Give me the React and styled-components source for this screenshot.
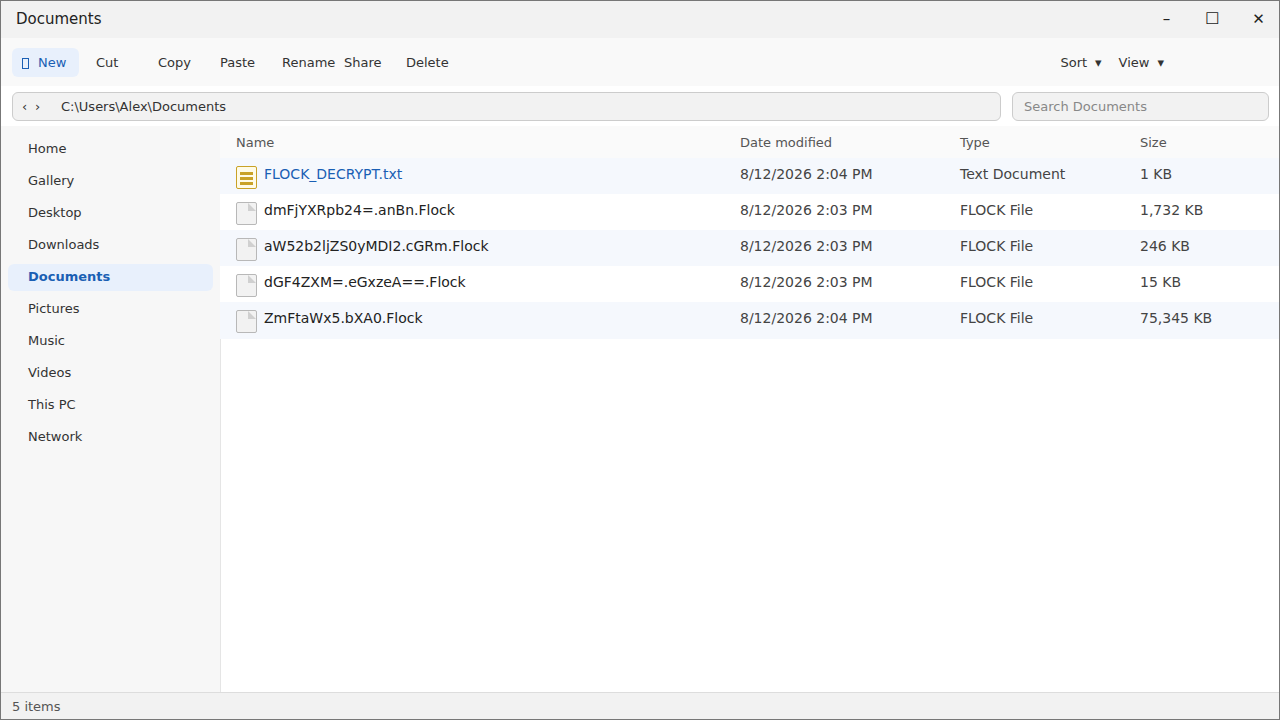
import React from 'react';
import styled, { createGlobalStyle } from 'styled-components';

const GlobalStyle = createGlobalStyle`
  *, *::before, *::after { box-sizing: border-box; }
  body { margin: 0; }
  body, button, input {
    font-family: "DejaVu Sans", Verdana, sans-serif;
    font-size: 13px;
    color: #333;
  }
`;

const Window = styled.div`
  display: flex;
  flex-direction: column;
  min-height: 100vh;
  border: 1px solid #777;
  background: #fff;
`;

const TitleBar = styled.header`
  display: flex;
  align-items: center;
  justify-content: space-between;
  height: 37px;
  padding: 0 0 1px 15px;
  background: #f2f2f2;
`;

const Title = styled.h1`
  margin: 0;
  font-size: 15px;
  font-weight: 400;
  line-height: 20px;
  color: #222;
`;

const WindowControls = styled.div`
  display: flex;
`;

const WindowButton = styled.button`
  width: 46px;
  height: 36px;
  padding: 0 0 0 5px;
  border: 0;
  background: none;
  font-size: ${(p) => (p.$large ? '16px' : '15px')};
  line-height: 20px;
  color: #222;
`;

const Toolbar = styled.div`
  display: flex;
  align-items: center;
  height: 48px;
  padding: 0 115px 0 11px;
  background: #f9f9f9;
`;

const ToolButton = styled.button`
  flex: none;
  width: 62px;
  height: 28px;
  padding: 0;
  border: 0;
  background: none;
  text-align: left;
`;

const NewButton = styled.button`
  display: flex;
  align-items: center;
  gap: 8px;
  width: 67px;
  height: 29px;
  margin-right: 17px;
  padding: 0 0 0 10px;
  border: 0;
  border-radius: 6px;
  background: #e8f0fc;
  color: #1a5fb4;
`;

const MenuGroup = styled.div`
  display: flex;
  gap: 17px;
  margin-left: auto;
`;

const MenuButton = styled.button`
  display: flex;
  align-items: center;
  gap: 8px;
  height: 28px;
  padding: 0;
  border: 0;
  background: none;
`;

const AddressRow = styled.div`
  display: flex;
  gap: 11px;
  height: 40px;
  padding: 6px 10px 5px 11px;
`;

const AddressBar = styled.div`
  display: flex;
  flex: 1;
  align-items: center;
  padding-left: 5px;
  border: 1px solid #ccc;
  border-radius: 6px;
  background: #f2f2f2;
`;

const NavButton = styled.button`
  width: 13px;
  padding: 0;
  border: 0;
  background: none;
`;

const PathInput = styled.input`
  flex: 1;
  min-width: 0;
  margin-left: 17px;
  padding: 0;
  border: 0;
  outline: 0;
  background: none;
`;

const SearchInput = styled.input`
  width: 257px;
  padding: 0 11px;
  border: 1px solid #ccc;
  border-radius: 6px;
  outline: 0;
  background: #f2f2f2;
  &::placeholder { color: #888; opacity: 1; }
`;

const Body = styled.div`
  display: flex;
  flex: 1;
`;

const Sidebar = styled.nav`
  display: flex;
  flex-direction: column;
  flex: none;
  gap: 5px;
  width: 219px;
  padding: 10px 7px 0;
  background: #f7f7f7;
`;

const SidebarLink = styled.a`
  height: 27px;
  padding-left: 20px;
  border-radius: 6px;
  background: ${(p) => (p.$active ? '#e8f0fc' : 'transparent')};
  color: ${(p) => (p.$active ? '#1a5fb4' : '#333')};
  font-weight: ${(p) => (p.$active ? 700 : 400)};
  line-height: 25px;
  text-decoration: none;
`;

const Main = styled.main`
  flex: 1;
  min-width: 0;
  box-shadow: inset 1px 0 #e5e5e5;
`;

const FileTable = styled.table`
  width: 100%;
  table-layout: fixed;
  border-spacing: 0;
`;

const HeadCell = styled.th`
  width: ${(p) => p.$width || 'auto'};
  height: 32px;
  padding: 0 0 0 ${(p) => (p.$first ? '16px' : '0')};
  background: #fafafa;
  color: #555;
  font-weight: 400;
  text-align: left;
`;

const Row = styled.tr`
  height: 36px;
  background: #fff;
  &:nth-child(odd) { background: #f5f8fd; }
  &:last-child td { border-bottom: 1px solid #f5f8fd; }
`;

const Cell = styled.td`
  height: 36px;
  padding: 6px 0 10px;
  color: #444;
  font-size: 14px;
  line-height: 20px;
`;

const NameCell = styled(Cell)`
  padding: 6px 0 5px 16px;
  color: ${(p) => (p.$note ? '#1a5fb4' : '#222')};
`;

const FileName = styled.div`
  display: flex;
  gap: 7px;
  padding-top: 2px;
  line-height: 17px;
`;

const StatusBar = styled.footer`
  height: 27px;
  padding-left: 11px;
  border-top: 1px solid #ddd;
  background: #f2f2f2;
  color: #555;
  line-height: 27px;
`;

function NoteIcon() {
  return (
    <svg width="21" height="23" viewBox="0 0 21 23" aria-hidden="true">
      <rect x="0.5" y="0.5" width="20" height="22" rx="1.5" fill="#fffbe6" stroke="#c9a227" />
      <path d="M4 6h13v3H4zM4 11h13v3H4zM4 16h13v3H4z" fill="#c9a227" />
    </svg>
  );
}

function FileIcon() {
  return (
    <svg width="21" height="23" viewBox="0 0 21 23" aria-hidden="true">
      <rect x="0.5" y="0.5" width="20" height="22" rx="1.5" fill="#f2f2f2" stroke="#b8b8b8" />
      <path d="M12 1v8h8z" fill="#d0d0d0" />
    </svg>
  );
}

function NewIcon() {
  return (
    <svg width="8" height="13" viewBox="0 0 8 13" aria-hidden="true">
      <rect x="0.5" y="2.5" width="6" height="10" fill="none" stroke="currentColor" />
    </svg>
  );
}

const tools = ['Cut', 'Copy', 'Paste', 'Rename', 'Share', 'Delete'];
const places = ['Home', 'Gallery', 'Desktop', 'Downloads', 'Documents', 'Pictures', 'Music', 'Videos', 'This PC', 'Network'];
const files = [
  { name: 'FLOCK_DECRYPT.txt', date: '8/12/2026 2:04 PM', type: 'Text Document', size: '1 KB', note: true },
  { name: 'dmFjYXRpb24=.anBn.Flock', date: '8/12/2026 2:03 PM', type: 'FLOCK File', size: '1,732 KB' },
  { name: 'aW52b2ljZS0yMDI2.cGRm.Flock', date: '8/12/2026 2:03 PM', type: 'FLOCK File', size: '246 KB' },
  { name: 'dGF4ZXM=.eGxzeA==.Flock', date: '8/12/2026 2:03 PM', type: 'FLOCK File', size: '15 KB' },
  { name: 'ZmFtaWx5.bXA0.Flock', date: '8/12/2026 2:04 PM', type: 'FLOCK File', size: '75,345 KB' },
];

export default function App() {
  return (
    <Window>
      <GlobalStyle />
      <TitleBar>
        <Title>Documents</Title>
        <WindowControls>
          <WindowButton aria-label="Minimize">–</WindowButton>
          <WindowButton aria-label="Maximize" $large>☐</WindowButton>
          <WindowButton aria-label="Close">✕</WindowButton>
        </WindowControls>
      </TitleBar>
      <Toolbar>
        <NewButton><NewIcon />New</NewButton>
        {tools.map((t) => <ToolButton key={t}>{t}</ToolButton>)}
        <MenuGroup>
          <MenuButton><span>Sort</span><span>▾</span></MenuButton>
          <MenuButton><span>View</span><span>▾</span></MenuButton>
        </MenuGroup>
      </Toolbar>
      <AddressRow>
        <AddressBar>
          <NavButton aria-label="Back">‹</NavButton>
          <NavButton aria-label="Forward">›</NavButton>
          <PathInput aria-label="Address" defaultValue="C:\Users\Alex\Documents" />
        </AddressBar>
        <SearchInput aria-label="Search Documents" placeholder="Search Documents" />
      </AddressRow>
      <Body>
        <Sidebar>
          {places.map((p) => (
            <SidebarLink key={p} href="#" $active={p === 'Documents'}>{p}</SidebarLink>
          ))}
        </Sidebar>
        <Main>
          <FileTable>
            <thead>
              <tr>
                <HeadCell $first>Name</HeadCell>
                <HeadCell $width="220px">Date modified</HeadCell>
                <HeadCell $width="180px">Type</HeadCell>
                <HeadCell $width="139px">Size</HeadCell>
              </tr>
            </thead>
            <tbody>
              {files.map((f) => (
                <Row key={f.name}>
                  <NameCell $note={f.note}>
                    <FileName>
                      {f.note ? <NoteIcon /> : <FileIcon />}
                      <span>{f.name}</span>
                    </FileName>
                  </NameCell>
                  <Cell>{f.date}</Cell>
                  <Cell>{f.type}</Cell>
                  <Cell>{f.size}</Cell>
                </Row>
              ))}
            </tbody>
          </FileTable>
        </Main>
      </Body>
      <StatusBar>5 items</StatusBar>
    </Window>
  );
}
